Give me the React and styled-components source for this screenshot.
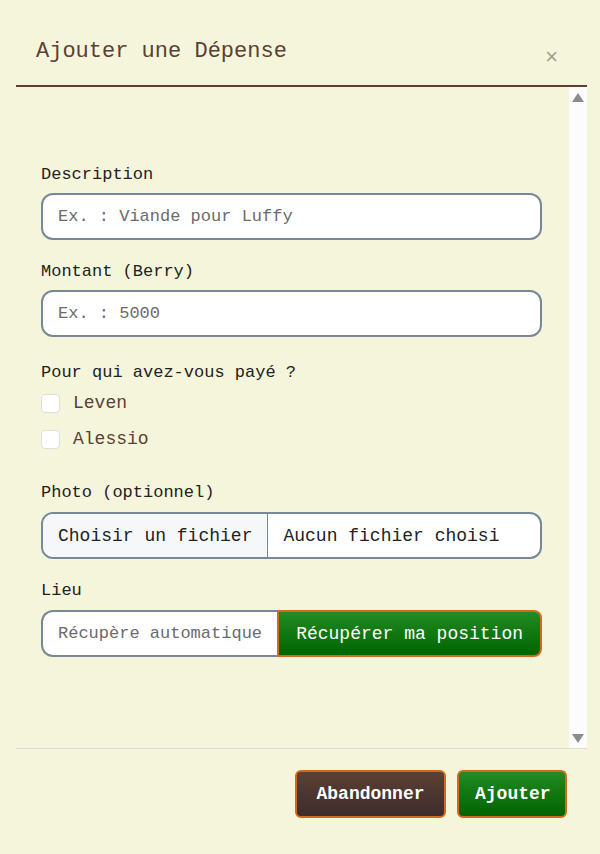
import React from 'react';
import styled, { createGlobalStyle } from 'styled-components';

const GlobalStyle = createGlobalStyle`
  body {
    margin: 0;
    background: #f5f5dc;
    font-family: 'Liberation Mono', 'DejaVu Sans Mono', monospace;
  }
`;

const Dialog = styled.div`
  width: 571px;
  margin: 0 0 0 16px;
  display: flex;
  flex-direction: column;
`;

const Header = styled.div`
  display: flex;
  align-items: flex-start;
  justify-content: space-between;
  padding: 39px 20px 20px 20px;
  border-bottom: 2px solid #5c4033;
`;

const Title = styled.h5`
  margin: 0;
  font-size: 22px;
  line-height: 26px;
  font-weight: normal;
  color: #5c4033;
`;

const CloseButton = styled.button`
  border: none;
  background: none;
  padding: 0;
  margin: 12px 9px 0 0;
  height: 12px;
  font-family: 'Liberation Sans', Arial, sans-serif;
  font-size: 22px;
  line-height: 12px;
  color: #a39d8c;
  cursor: pointer;
`;

const Body = styled.div`
  display: flex;
  height: 661px;
`;

const Content = styled.div`
  flex: 1;
  min-width: 0;
  padding: 76px 27px 0 25px;
`;

const ScrollTrack = styled.div`
  width: 18px;
  flex-shrink: 0;
  display: flex;
  flex-direction: column;
  justify-content: space-between;
  align-items: center;
  padding: 6px 0 5px;
  box-sizing: border-box;
  background: #fcfcfc;
`;

const Field = styled.div`
  margin-bottom: ${(props) => props.$gap || 20}px;
`;

const Label = styled.label`
  display: block;
  font-size: 17px;
  line-height: 24px;
  color: #222;
  margin-bottom: ${(props) => props.$gap || 6}px;
`;

const TextInput = styled.input`
  display: block;
  width: 100%;
  height: 47px;
  box-sizing: border-box;
  border: 2px solid #778899;
  border-radius: 12px;
  padding: 0 15px;
  background: #fff;
  font-family: inherit;
  font-size: 17px;
  color: #222;
  outline: none;
  &::placeholder {
    color: #6b6b6b;
  }
`;

const CheckRow = styled.label`
  display: flex;
  align-items: center;
  gap: 13px;
  height: 24px;
  margin-top: ${(props) => props.$top || 0}px;
  font-size: 18px;
  color: #5c4033;
`;

const Box = styled.span`
  width: 19px;
  height: 19px;
  box-sizing: border-box;
  background: #fff;
  border: 1px solid #dedede;
  border-radius: 4px;
`;

const FileBox = styled.div`
  display: flex;
  height: 47px;
  box-sizing: border-box;
  border: 2px solid #778899;
  border-radius: 12px;
  overflow: hidden;
  background: #fff;
  font-size: 18px;
  color: #222;
`;

const FileButton = styled.span`
  display: flex;
  align-items: center;
  padding: 0 15px;
  background: #f6f7f9;
  border-right: 1px solid #778899;
`;

const FileName = styled.span`
  display: flex;
  align-items: center;
  padding: 0 15px;
`;

const InputGroup = styled.div`
  display: flex;
  height: 47px;
`;

const GroupInput = styled(TextInput)`
  flex: 1;
  min-width: 0;
  height: 100%;
  border-radius: 12px 0 0 12px;
  border-right: none;
`;

const ActionButton = styled.button`
  height: ${(props) => props.$height || 47}px;
  width: ${(props) => (props.$width ? `${props.$width}px` : 'auto')};
  box-sizing: border-box;
  border: 2px solid #d2691e;
  border-radius: ${(props) => props.$radius || '6px'};
  padding: 0 ${(props) => props.$pad || 16}px;
  font-family: inherit;
  font-size: ${(props) => props.$size || 18}px;
  font-weight: ${(props) => (props.$bold ? 'bold' : 'normal')};
  color: #fff;
  background: ${(props) =>
    props.$variant === 'brown'
      ? 'linear-gradient(#5c4033, #3d2b2d)'
      : 'linear-gradient(#228b22, #006400)'};
  cursor: pointer;
  white-space: nowrap;
`;

const Footer = styled.div`
  display: flex;
  justify-content: flex-end;
  gap: 11px;
  padding: 21px 20px 0 0;
  border-top: 1px solid #dcdcd0;
`;

const Arrow = ({ down }) => (
  <svg width="12" height="9" viewBox="0 0 12 9">
    <path d={down ? 'M0 0h12L6 9z' : 'M6 0l6 9H0z'} fill="#8c8c8c" />
  </svg>
);

const App = () => (
  <>
    <GlobalStyle />
    <Dialog>
      <Header>
        <Title>Ajouter une Dépense</Title>
        <CloseButton aria-label="Fermer">×</CloseButton>
      </Header>
      <Body>
        <Content>
          <Field>
            <Label>Description</Label>
            <TextInput placeholder="Ex. : Viande pour Luffy" />
          </Field>
          <Field $gap={24}>
            <Label>Montant (Berry)</Label>
            <TextInput placeholder="Ex. : 5000" />
          </Field>
          <Field $gap={30}>
            <Label $gap={6}>Pour qui avez-vous payé ?</Label>
            <CheckRow>
              <Box />
              Leven
            </CheckRow>
            <CheckRow $top={12}>
              <Box />
              Alessio
            </CheckRow>
          </Field>
          <Field $gap={20}>
            <Label $gap={7}>Photo (optionnel)</Label>
            <FileBox>
              <FileButton>Choisir un fichier</FileButton>
              <FileName>Aucun fichier choisi</FileName>
            </FileBox>
          </Field>
          <Field>
            <Label $gap={7}>Lieu</Label>
            <InputGroup>
              <GroupInput placeholder="Récupère automatiquement" readOnly />
              <ActionButton $radius="0 8px 8px 0" $pad={17}>
                Récupérer ma position
              </ActionButton>
            </InputGroup>
          </Field>
        </Content>
        <ScrollTrack>
          <Arrow />
          <Arrow down />
        </ScrollTrack>
      </Body>
      <Footer>
        <ActionButton $variant="brown" $height={48} $width={151} $pad={0} $bold>
          Abandonner
        </ActionButton>
        <ActionButton $height={48} $width={110} $pad={0} $bold>
          Ajouter
        </ActionButton>
      </Footer>
    </Dialog>
  </>
);

export default App;
